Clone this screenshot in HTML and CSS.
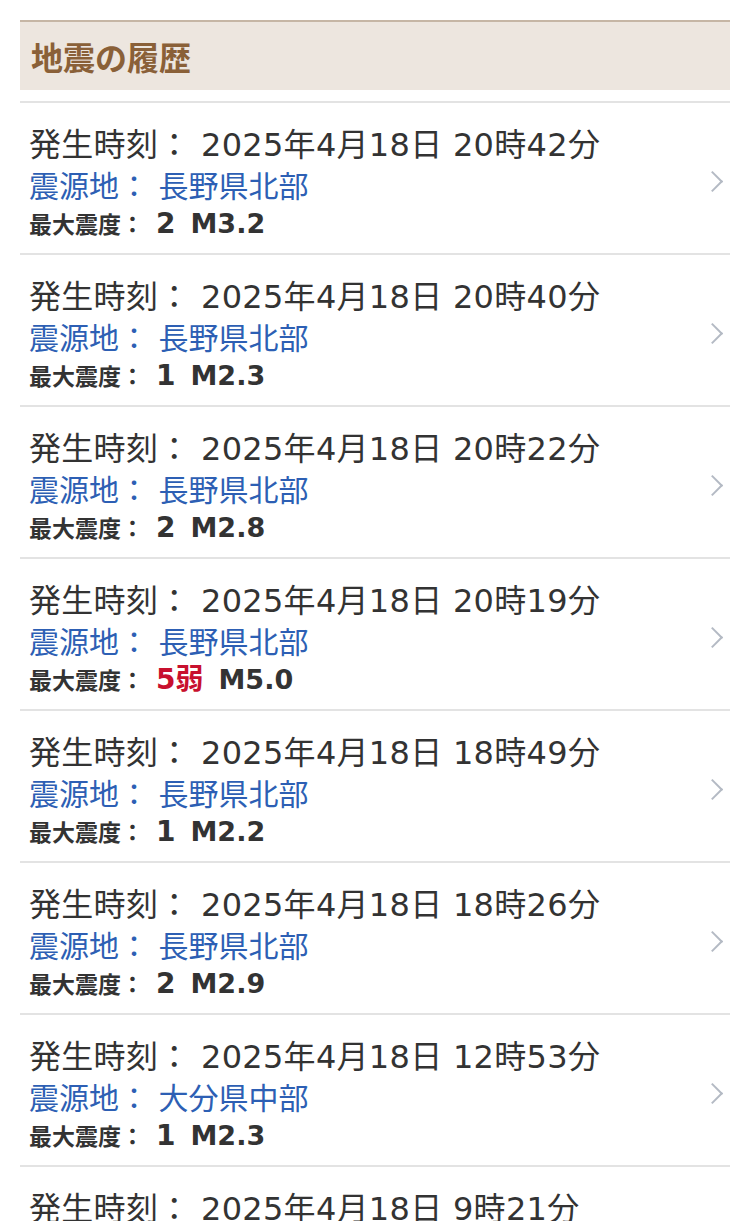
FILE: index.html
```html
<!DOCTYPE html>
<html lang="ja">
  <head>
    <meta charset="utf-8" />
    <title>地震の履歴</title>
    <link rel="stylesheet" href="styles.css">
  </head>
  <body>
    <div class="history">
      <h2 class="history-title">地震の履歴</h2>
      <ul class="quake-list">
        <li class="quake">
          <div class="quake-info">
            <div class="quake-time">発生時刻： 2025年4月18日 20時42分</div>
            <div class="quake-place">震源地： 長野県北部</div>
            <div class="quake-scale"><span class="scale-label">最大震度：</span><span class="scale-value">2</span><span class="magnitude">M3.2</span></div>
          </div>
          <span class="chevron"></span>
        </li>
        <li class="quake">
          <div class="quake-info">
            <div class="quake-time">発生時刻： 2025年4月18日 20時40分</div>
            <div class="quake-place">震源地： 長野県北部</div>
            <div class="quake-scale"><span class="scale-label">最大震度：</span><span class="scale-value">1</span><span class="magnitude">M2.3</span></div>
          </div>
          <span class="chevron"></span>
        </li>
        <li class="quake">
          <div class="quake-info">
            <div class="quake-time">発生時刻： 2025年4月18日 20時22分</div>
            <div class="quake-place">震源地： 長野県北部</div>
            <div class="quake-scale"><span class="scale-label">最大震度：</span><span class="scale-value">2</span><span class="magnitude">M2.8</span></div>
          </div>
          <span class="chevron"></span>
        </li>
        <li class="quake">
          <div class="quake-info">
            <div class="quake-time">発生時刻： 2025年4月18日 20時19分</div>
            <div class="quake-place">震源地： 長野県北部</div>
            <div class="quake-scale"><span class="scale-label">最大震度：</span><span class="scale-value strong">5弱</span><span class="magnitude">M5.0</span></div>
          </div>
          <span class="chevron"></span>
        </li>
        <li class="quake">
          <div class="quake-info">
            <div class="quake-time">発生時刻： 2025年4月18日 18時49分</div>
            <div class="quake-place">震源地： 長野県北部</div>
            <div class="quake-scale"><span class="scale-label">最大震度：</span><span class="scale-value">1</span><span class="magnitude">M2.2</span></div>
          </div>
          <span class="chevron"></span>
        </li>
        <li class="quake">
          <div class="quake-info">
            <div class="quake-time">発生時刻： 2025年4月18日 18時26分</div>
            <div class="quake-place">震源地： 長野県北部</div>
            <div class="quake-scale"><span class="scale-label">最大震度：</span><span class="scale-value">2</span><span class="magnitude">M2.9</span></div>
          </div>
          <span class="chevron"></span>
        </li>
        <li class="quake">
          <div class="quake-info">
            <div class="quake-time">発生時刻： 2025年4月18日 12時53分</div>
            <div class="quake-place">震源地： 大分県中部</div>
            <div class="quake-scale"><span class="scale-label">最大震度：</span><span class="scale-value">1</span><span class="magnitude">M2.3</span></div>
          </div>
          <span class="chevron"></span>
        </li>
        <li class="quake">
          <div class="quake-info">
            <div class="quake-time">発生時刻： 2025年4月18日 9時21分</div>
            <div class="quake-place">震源地： 大分県中部</div>
            <div class="quake-scale"><span class="scale-label">最大震度：</span><span class="scale-value">1</span><span class="magnitude">M2.0</span></div>
          </div>
          <span class="chevron"></span>
        </li>
      </ul>
    </div>
  </body>
</html>
```
FILE: styles.css
```css
html,
body {
  margin: 0;
  padding: 0;
  background: #fff;
}

body {
  font-family: "DejaVu Sans", "Noto Sans CJK JP", sans-serif;
  color: #333;
}

.history {
  margin: 20px 20px 0 20px;
}

.history-title {
  margin: 0;
  height: 68px;
  padding-left: 11px;
  display: flex;
  align-items: center;
  border-top: 2px solid #c6b6a5;
  background-color: #ede6df;
  color: #8a6038;
  font-family: "Noto Sans CJK JP", sans-serif;
  font-size: 32px;
  font-weight: bold;
}

.quake-list {
  list-style: none;
  margin: 11px 0 0 0;
  padding: 0;
  border-top: 2px solid #e3e3e3;
}

.quake {
  display: flex;
  align-items: center;
  justify-content: space-between;
  padding: 20px 0 14px 9px;
  border-bottom: 2px solid #e3e3e3;
}

.quake-time {
  height: 44px;
  font-size: 32px;
  line-height: 44px;
  letter-spacing: 0.3px;
  color: #333;
}

.quake-place {
  height: 40px;
  font-size: 30px;
  line-height: 40px;
  color: #2d5fb4;
}

.quake-scale {
  display: flex;
  align-items: baseline;
  height: 32px;
  line-height: 32px;
  font-weight: bold;
  overflow: hidden;
}

.scale-label {
  font-family: "Noto Sans CJK JP", sans-serif;
  font-size: 23px;
  margin-right: 12px;
}

.scale-value {
  font-size: 28px;
  margin-right: 15px;
}

.scale-value.strong {
  color: #c8102e;
  margin-right: 15px;
}

.magnitude {
  font-size: 27px;
}

.chevron {
  width: 13px;
  height: 13px;
  margin-right: 10px;
  border-top: 2px solid #b4bac4;
  border-right: 2px solid #b4bac4;
  transform: rotate(45deg);
}
```
